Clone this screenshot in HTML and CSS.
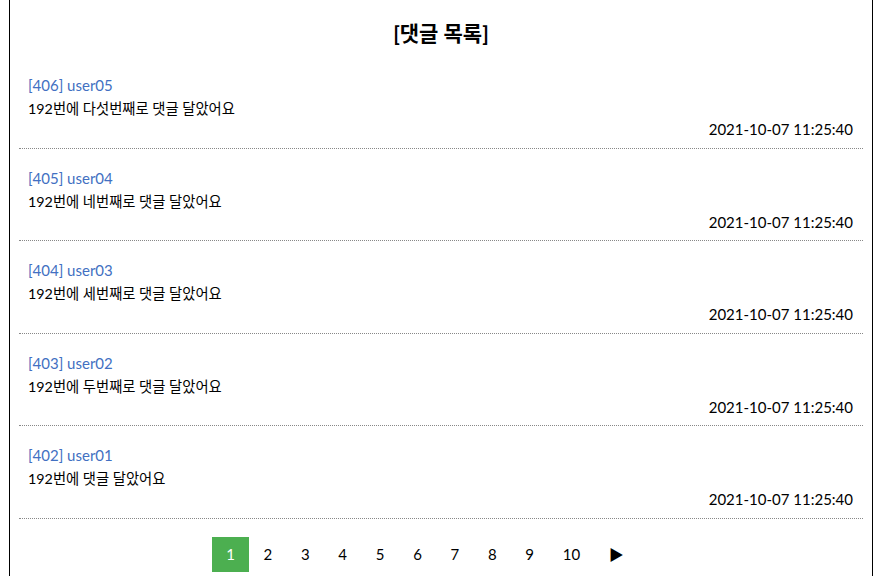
FILE: index.html
```html
<!DOCTYPE html>
<html>
<head>
    <meta charset="utf-8">
    <title>댓글 목록</title>
    <link rel="stylesheet" href="styles.css">
</head>
<body>

<div class="container">

    <h1 class="list-title">[댓글 목록]</h1>

    <ul class="reply-list">

        <li class="reply-item">
            <div class="reply-writer">[406] user05</div>
            <div class="reply-content">192번에 다섯번째로 댓글 달았어요</div>
            <div class="reply-date">2021-10-07 11:25:40</div>
        </li>

        <li class="reply-item">
            <div class="reply-writer">[405] user04</div>
            <div class="reply-content">192번에 네번째로 댓글 달았어요</div>
            <div class="reply-date">2021-10-07 11:25:40</div>
        </li>

        <li class="reply-item">
            <div class="reply-writer">[404] user03</div>
            <div class="reply-content">192번에 세번째로 댓글 달았어요</div>
            <div class="reply-date">2021-10-07 11:25:40</div>
        </li>

        <li class="reply-item">
            <div class="reply-writer">[403] user02</div>
            <div class="reply-content">192번에 두번째로 댓글 달았어요</div>
            <div class="reply-date">2021-10-07 11:25:40</div>
        </li>

        <li class="reply-item">
            <div class="reply-writer">[402] user01</div>
            <div class="reply-content">192번에 댓글 달았어요</div>
            <div class="reply-date">2021-10-07 11:25:40</div>
        </li>

    </ul>

    <div class="pagination">
        <a href="#" class="active">1</a>
        <a href="#">2</a>
        <a href="#">3</a>
        <a href="#">4</a>
        <a href="#">5</a>
        <a href="#">6</a>
        <a href="#">7</a>
        <a href="#">8</a>
        <a href="#">9</a>
        <a href="#">10</a>
        <a href="#" class="next">&#9654;</a>
    </div>

</div>

</body>
</html>
```

FILE: styles.css
```css
* {
    font-family: Lato, "Noto Sans CJK KR", sans-serif;
    box-sizing: border-box;
}

body {
    margin: 0;
    padding: 0;
}

.container {
    width: 864px;
    min-height: 576px;
    margin-left: 9px;
    padding: 0 9px;
    border-left: 1px solid #000;
    border-right: 1px solid #000;
}

.list-title {
    margin: 0 0 8px;
    padding-top: 18px;
    font-size: 21px;
    line-height: 30px;
    text-align: center;
}

.reply-list {
    list-style: none;
    margin: 0;
    padding: 0;
}

.reply-item {
    padding: 19px 10px 8.5px 9px;
    border-bottom: 1px dotted #888;
}

.reply-writer {
    color: #4270c2;
    font-size: 15px;
    line-height: 20px;
}

.reply-content {
    margin-top: 4px;
    font-size: 14.3px;
    line-height: 20px;
}

.reply-date {
    font-size: 15px;
    line-height: 20px;
    text-align: right;
}

.pagination {
    display: flex;
    justify-content: center;
    margin-top: 18px;
    padding-right: 32px;
}

.pagination a {
    padding: 8px 14.35px;
    font-size: 15px;
    line-height: 19px;
    color: #000;
    text-decoration: none;
}

.pagination a.active {
    background: #4caf50;
    color: #fff;
}
```
